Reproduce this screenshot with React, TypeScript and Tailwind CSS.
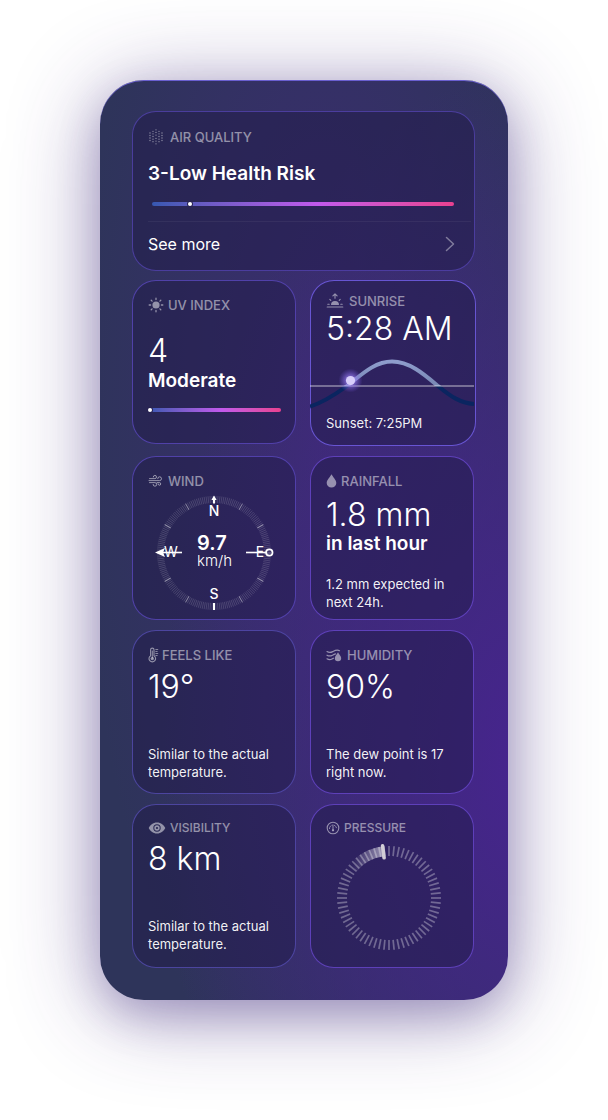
import type { ReactNode } from "react";
import clsx from "clsx";

function AirIcon() {
  const columns = [
    { x: 1.5, ys: [4, 6.5, 9, 11.5] },
    { x: 4.5, ys: [2.3, 4.8, 7.5, 10.2, 12.7] },
    { x: 7.5, ys: [0.8, 3.4, 6.1, 9.4, 12.1, 14.8] },
    { x: 10.5, ys: [2.3, 4.8, 7.5, 10.2, 12.7] },
    { x: 13.5, ys: [4, 6.5, 9, 11.5] },
  ];
  return (
    <svg width="16" height="16" viewBox="-0.5 0 16 16" fill="currentColor" aria-hidden="true">
      {columns.map((c) => c.ys.map((y) => <circle key={`${c.x}-${y}`} cx={c.x} cy={y} r="0.65" />))}
    </svg>
  );
}

function SunIcon() {
  return (
    <svg width="16" height="16" viewBox="0 0 16 16" fill="none" stroke="currentColor" strokeWidth="1.3" strokeLinecap="round" aria-hidden="true">
      <circle cx="8" cy="8" r="3.6" fill="currentColor" stroke="none" />
      <path d="M8 1.2v1.4M8 13.4v1.4M1.2 8h1.4M13.4 8h1.4M3.2 3.2l0.900 0.900M11.900 11.900l0.900 0.900M3.2 12.8l0.900-0.900M11.900 4.100l0.900-0.900" />
    </svg>
  );
}

function SunriseIcon() {
  return (
    <svg width="18" height="16" viewBox="0 0 18 16" fill="none" stroke="currentColor" strokeWidth="1.1" strokeLinecap="round" strokeLinejoin="round" aria-hidden="true">
      <path d="M1.2 14h15.6M9 5.2V1M6.9 2.9 9 .8l2.1 2.1M1.8 11.2h1.4M14.8 11.2h1.4M3.8 6.300l1 1M14.2 6.300l-1 1" />
      <path d="M5 12a4 4 0 0 1 8 0z" fill="currentColor" stroke="none" />
    </svg>
  );
}

function WindIcon() {
  return (
    <svg width="15" height="14" viewBox="0 0 15 14" fill="none" stroke="currentColor" strokeWidth="1" strokeLinecap="round" aria-hidden="true">
      <path d="M1.500 4.600h5.400a1.600 1.600 0 1 0-1.600-1.600" />
      <path d="M1 6.600h10.600a1.900 1.900 0 1 0-1.900-1.900" />
      <path d="M1.500 8.600h5.400a1.800 1.800 0 1 1-1.800 1.800" />
      <path d="M9 8.600h2.400a1.300 1.300 0 1 1-1.300 1.300" />
    </svg>
  );
}

function DropIcon() {
  return (
    <svg width="11" height="14" viewBox="0 0 11 14" fill="currentColor" aria-hidden="true">
      <path d="M5.500.3C6.400 2.400 10.300 6 10.300 9a4.800 4.600 0 0 1-9.600 0C.7 6 4.600 2.400 5.500.3z" />
    </svg>
  );
}

function ThermometerIcon() {
  return (
    <svg width="11" height="16" viewBox="0 0 11 16" fill="none" stroke="currentColor" strokeLinecap="round" aria-hidden="true">
      <path d="M2.600 8.700V2.800a1.700 1.700 0 0 1 3.400 0v5.900a3.300 3.300 0 1 1-3.400 0z" strokeWidth="1.100" />
      <circle cx="4.300" cy="11.600" r="1.700" fill="currentColor" stroke="none" />
      <path d="M4.300 4v7" strokeWidth="1" />
      <path d="M7.800 2.500h2M7.800 4.500h1.400M7.800 6.500h2M7.800 8.500h1.400" strokeWidth="0.900" />
    </svg>
  );
}

function HumidityIcon() {
  return (
    <svg width="16" height="14" viewBox="0 0 16 14" fill="none" stroke="currentColor" strokeWidth="1.2" strokeLinecap="round" aria-hidden="true">
      <path d="M1 3.600c1.800 1.100 3.800 1 5.700 0s4.200-2.400 6.800-.9" />
      <path d="M1 7.200c1.800 1.100 3.600 1 5.500 0 1-.6 1.900-1.100 3-1.300" />
      <path d="M1 10.800c1.800 1.100 3.400 1 5 .2.700-.3 1-.6 1.400-.8" />
      <path d="M12 4.200c.5 1.500 3.200 3.700 3.200 5.900a3.200 3.200 0 0 1-6.400 0c0-2.200 2.700-4.400 3.200-5.900z" fill="currentColor" stroke="none" />
    </svg>
  );
}

function EyeIcon() {
  return (
    <svg width="18" height="12" viewBox="0 0 18 12" fill="currentColor" fillRule="evenodd" aria-hidden="true">
      <path d="M9 .5c4 0 7 2.700 8.300 5.500C16 8.800 13 11.500 9 11.500S2 8.800.7 6C2 3.200 5 .5 9 .5zm0 1.800a3.700 3.700 0 1 0 0 7.400 3.700 3.700 0 0 0 0-7.400z" />
      <path d="M9 3.300a2.700 2.700 0 1 1 0 5.400 2.700 2.700 0 0 1 0-5.400zm0 1.600a1.100 1.100 0 1 0 0 2.200 1.100 1.100 0 0 0 0-2.200z" />
    </svg>
  );
}

function GaugeIcon() {
  return (
    <svg width="14" height="14" viewBox="0 0 14 14" fill="none" stroke="currentColor" strokeLinecap="round" aria-hidden="true">
      <circle cx="7" cy="7" r="5.800" strokeWidth="1.100" />
      <path d="M3.500 7.600a3.500 3.500 0 0 1 7 0" strokeWidth="1" strokeDasharray="1 1.200" />
      <path d="M7 5.200v4" strokeWidth="1" />
      <circle cx="7" cy="9.300" r="1.100" fill="currentColor" stroke="none" />
    </svg>
  );
}

function Card({ children, className, label, icon, gap = "gap-1", small = false }: {
  children: ReactNode;
  className?: string;
  label: string;
  icon: ReactNode;
  gap?: string;
  small?: boolean;
}) {
  return (
    <section
      className={clsx(
        "flex flex-col rounded-[24px] border bg-[#201a48]/50 px-[15px]",
        className,
      )}
    >
      <h2
        className={clsx(
          "flex items-center leading-[18px] font-medium text-white/50",
          small ? "text-[12px]" : "text-[13px]",
          gap,
        )}
      >
        {icon}
        {label}
      </h2>
      {children}
    </section>
  );
}

function Value({ children }: { children: ReactNode }) {
  return <p className="text-[32px] leading-9 font-[350] whitespace-nowrap">{children}</p>;
}

function Note({ children }: { children: ReactNode }) {
  return <p className="mt-auto text-[13px] leading-[18px] text-white/95">{children}</p>;
}

function Meter({ label, percent, className }: { label: string; percent: number; className?: string }) {
  return (
    <div
      role="meter"
      aria-label={label}
      aria-valuemin={0}
      aria-valuemax={100}
      aria-valuenow={percent}
      className={clsx("relative h-1 rounded-full bg-linear-to-r from-[#3658b1] via-[#c159ec] via-55% to-[#e9408f]", className)}
    >
      <span className="absolute top-0 size-1 rounded-full bg-white ring-1 ring-[#282352]" style={{ left: `${percent}%` }} />
    </div>
  );
}

function SunCurve() {
  const curve = "M0 51.500C12 48 24 40.500 37 31C50 21 64 6.500 82 6.500S115 20 128 31C140 41 150 48 164 49";
  return (
    <svg viewBox="1 0 164 56" className="-mx-[15px] mt-2 block overflow-visible" aria-hidden="true">
      <defs>
        <clipPath id="day"><rect x="0" y="0" width="164" height="31" /></clipPath>
        <clipPath id="night"><rect x="0" y="31" width="164" height="25" /></clipPath>
        <linearGradient id="sky" x1="0" y1="0" x2="0" y2="1">
          <stop offset="0" stopColor="#8e9dcc" />
          <stop offset="1" stopColor="#6577a0" />
        </linearGradient>
        <radialGradient id="glow">
          <stop offset="0.2" stopColor="#a78bfa" stopOpacity="0.800" />
          <stop offset="1" stopColor="#7c5cf0" stopOpacity="0" />
        </radialGradient>
      </defs>
      <path d={curve} fill="none" stroke="#0a2560" strokeWidth="4" clipPath="url(#night)" />
      <path d={curve} fill="none" stroke="url(#sky)" strokeWidth="4" clipPath="url(#day)" />
      <path d="M0 31h164" stroke="#ffffff" strokeOpacity="0.350" strokeWidth="1.800" />
      <circle cx="40.500" cy="25.500" r="12" fill="url(#glow)" />
      <circle cx="40.500" cy="25.500" r="4.600" fill="#d8cefb" />
    </svg>
  );
}

function Compass() {
  const ticks = Array.from({ length: 180 }, (_, i) => i * 2);
  return (
    <div className="relative mt-[5px] self-center">
      <svg width="120" height="116" viewBox="-60 -58 120 116" className="block" role="img" aria-label="Wind direction: west">
        {ticks.map((a) => {
          const major = a % 30 === 0;
          return (
            <path
              key={a}
              d="M0 -57v7"
              transform={`rotate(${a})`}
              stroke="#ffffff"
              strokeOpacity={major ? 0.5 : 0.2}
              strokeWidth={major ? 0.9 : 0.7}
            />
          );
        })}
        <path d="M0 -57.500l2.600 4.500h-5.200zM-1 -53.500h2v4h-2z" fill="#ffffff" />
        <path d="M0 50v7" stroke="#ffffff" strokeWidth="2" />
        <path d="M-32 -0.500h-20" stroke="#ffffff" strokeWidth="1.600" />
        <path d="M-59 -0.500l10 -4.500l-2 4.500l2 4.500z" fill="#ffffff" />
        <path d="M32 -0.500h20" stroke="#ffffff" strokeWidth="1.600" />
        <circle cx="55.300" cy="-0.500" r="3.200" fill="none" stroke="#ffffff" strokeWidth="1.800" />
        <g fill="#ffffff" textAnchor="middle" className="text-[14px]">
          <text x="0" y="-37" className="font-medium">N</text>
          <text x="0" y="46" className="font-medium">S</text>
          <text x="-43" y="4">W</text>
          <text x="46" y="4">E</text>
        </g>
      </svg>
      <p className="absolute top-[38px] left-[43px] flex flex-col">
        <span className="text-[20px] leading-5 font-semibold">9.7</span>
        <span className="text-[15px] leading-4 font-light">km/h</span>
      </p>
    </div>
  );
}

function PressureDial() {
  const ticks = Array.from({ length: 64 }, (_, i) => (i * 360) / 64);
  return (
    <svg width="108" height="108" viewBox="-54 -54 108 108" className="mt-[7px] mr-[6px] self-center" role="img" aria-label="Pressure dial">
      {ticks.map((a) => (
        <path key={a} d="M0 -52v10" transform={`rotate(${a})`} stroke="#ffffff" strokeOpacity="0.320" strokeWidth="1.700" />
      ))}
      <path d="M-36 -30A47 47 0 0 1 -6 -46.600" fill="none" stroke="url(#sweep)" strokeWidth="10" />
      <path d="M0 -52.500v12" transform="rotate(-7)" stroke="#d2ced6" strokeWidth="3.600" strokeLinecap="round" />
      <defs>
        <linearGradient id="sweep">
          <stop offset="0" stopColor="#ffffff" stopOpacity="0" />
          <stop offset="1" stopColor="#ffffff" stopOpacity="0.500" />
        </linearGradient>
      </defs>
    </svg>
  );
}

export default function App() {
  return (
    <div className="min-h-screen overflow-hidden bg-white px-8 py-20 font-['Inter',sans-serif] text-white">
      <main className="mx-auto w-full max-w-[408px] rounded-[44px] bg-[#2e345a] bg-[radial-gradient(ellipse_90%_75%_at_105%_74%,#47248f_0%,#47248f00_100%),radial-gradient(ellipse_60%_75%_at_55%_38%,#3f2a78cc_0%,#3f2a7800_100%)] pt-[31px] pr-[34px] pb-8 pl-8 shadow-[inset_0_1px_0_#6a5fd0,0_16px_40px_rgba(59,38,123,0.25),0_10px_90px_rgba(59,38,123,0.45)]">
        <Card label="AIR QUALITY" icon={<AirIcon />} gap="gap-[6px]" className="-mr-px h-40 border-[#5d4bc4]/65 pt-4">
          <p className="mt-4 text-[19px] leading-6 font-semibold">3-Low Health Risk</p>
          <Meter label="Air quality" percent={12} className="mt-4 mr-1 ml-1 w-auto max-w-[302px]" />
          <hr className="mt-[15px] -mr-3 border-white/5" />
          <button type="button" className="mt-2 flex items-center justify-between pr-1 text-left text-[16px] leading-7">
            See more
            <svg width="10" height="16" viewBox="0 0 10 16" fill="none" stroke="currentColor" strokeOpacity="0.400" strokeWidth="1.500" strokeLinecap="round" strokeLinejoin="round" aria-hidden="true">
              <path d="M1.500 1.500 8.500 8l-7 6.500" />
            </svg>
          </button>
        </Card>

        <div className="mt-[9px] grid grid-cols-2 gap-x-[14px] gap-y-[10px]">
          <Card label="UV INDEX" icon={<SunIcon />} className="min-h-[164px] self-start border-[#5d4bc4]/75 pt-[15px]">
            <div className="mt-[19px]">
              <Value>4</Value>
              <p className="text-[19px] leading-6 font-semibold">Moderate</p>
            </div>
            <Meter label="UV index" percent={0} className="mt-[15px] -mr-px" />
          </Card>

          <Card label="SUNRISE" icon={<SunriseIcon />} gap="gap-[5px]" className="-mr-[2px] min-h-[166px] border-[#6f5be0]/90 pt-[11px] pb-[13px]">
            <div className="mt-px">
              <Value>5:28 AM</Value>
            </div>
            <SunCurve />
            <Note>Sunset: 7:25PM</Note>
          </Card>

          <Card label="WIND" icon={<WindIcon />} gap="gap-[5px]" className="min-h-[164px] border-[#5d4bc4]/75 pt-[15px]">
            <Compass />
          </Card>

          <Card label="RAINFALL" icon={<DropIcon />} className="min-h-[164px] border-[#6a48cf]/80 pt-[15px] pb-2">
            <div className="mt-[7px]">
              <Value>1.8 mm</Value>
              <p className="text-[19px] leading-[22px] font-semibold">in last hour</p>
            </div>
            <Note>1.2 mm expected in next 24h.</Note>
          </Card>

          <Card label="FEELS LIKE" icon={<ThermometerIcon />} gap="gap-[3px]" className="min-h-[164px] border-[#5850b8]/75 pt-[15px] pb-3">
            <div className="mt-[5px]">
              <Value>19°</Value>
            </div>
            <Note>Similar to the actual temperature.</Note>
          </Card>

          <Card label="HUMIDITY" icon={<HumidityIcon />} gap="gap-[5px]" className="min-h-[164px] border-[#6a48cf]/80 pt-[15px] pb-3">
            <div className="mt-[5px]">
              <Value>90%</Value>
            </div>
            <Note>The dew point is 17 right now.</Note>
          </Card>

          <Card small label="VISIBILITY" icon={<EyeIcon />} className="min-h-[164px] border-[#5850b8]/75 pt-[14px] pb-[14px]">
            <div className="mt-1">
              <Value>8 km</Value>
            </div>
            <Note>Similar to the actual temperature.</Note>
          </Card>

          <Card small label="PRESSURE" icon={<GaugeIcon />} className="min-h-[164px] border-[#6a48cf]/80 pt-[14px]">
            <PressureDial />
          </Card>
        </div>
      </main>
    </div>
  );
}
